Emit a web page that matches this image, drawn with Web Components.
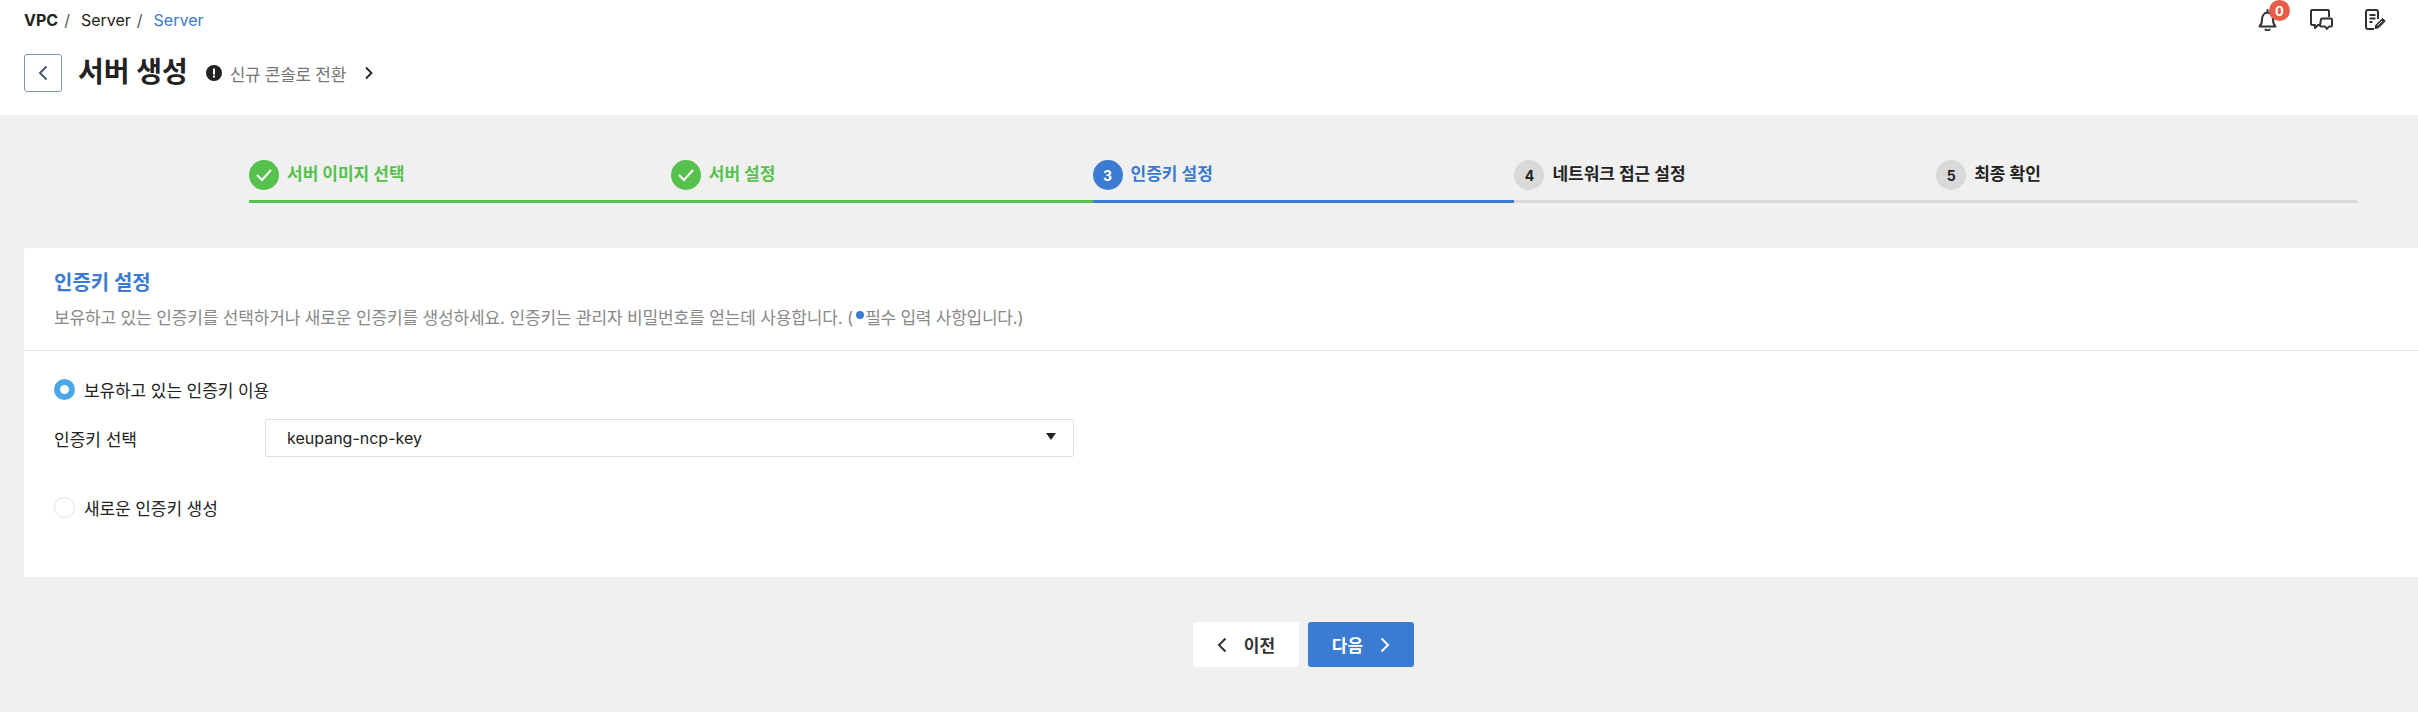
<!DOCTYPE html>
<html lang="ko">
<head>
<meta charset="utf-8">
<title>서버 생성</title>
<style>
    html, body { margin : 0; padding : 0; }
    body {
        background-color : #f0f0f0;
        font-family : Inter, "Noto Sans CJK KR", sans-serif;
        color : #222;
        height : 712px;
        overflow : hidden;
    }
</style>
</head>
<body>
<top-header></top-header>
<step-bar>
    <step-item state="done" label="서버 이미지 선택"></step-item>
    <step-item state="done" label="서버 설정"></step-item>
    <step-item state="active" num="3" label="인증키 설정"></step-item>
    <step-item num="4" label="네트워크 접근 설정"></step-item>
    <step-item num="5" label="최종 확인"></step-item>
</step-bar>
<key-card>
    <radio-option checked label="보유하고 있는 인증키 이용"></radio-option>
    <key-select label="인증키 선택" value="keupang-ncp-key"></key-select>
    <radio-option class="second" label="새로운 인증키 생성"></radio-option>
</key-card>
<page-nav></page-nav>

<script>
class TopHeader extends HTMLElement {
    constructor() {
        super();
        this.attachShadow({ mode : "open" });
    }

    connectedCallback() {
        this.shadowRoot.innerHTML = `
        <style>
            :host {
                display : block;
                background-color : white;
                height : 115px;
                padding : 0 24px;
                box-sizing : border-box;
                position : relative;
            }
            .crumbs {
                display : flex;
                height : 40px;
                align-items : center;
                font-size : 16px;
                color : #222;
            }
            .crumbs b { font-weight : 700; }
            .crumbs span { color : #555; margin : 0 11px 0 6px; }
            .crumbs .now { color : #3b7bd1; }
            .title-row {
                display : flex;
                align-items : center;
                height : 38px;
                margin-top : 14px;
            }
            .back {
                width : 38px;
                height : 38px;
                box-sizing : border-box;
                border : 1px solid #7d94b3;
                border-radius : 3px;
                display : flex;
                align-items : center;
                justify-content : center;
            }
            h1 {
                font-size : 28px;
                line-height : 38px;
                font-weight : 700;
                margin : -2px 0 0 16px;
                color : #222;
            }
            .notice {
                display : flex;
                align-items : center;
                margin-left : 18px;
                font-size : 17px;
                letter-spacing : -0.3px;
                color : #777;
            }
            .notice svg { margin-right : 8px; }
            .go { margin-left : 18px; display : flex; }
            .icons {
                position : absolute;
                top : 9px;
                right : 32px;
                display : flex;
                gap : 31px;
            }
            .bell { position : relative; width : 21px; height : 22px; }
            .badge {
                position : absolute;
                left : 11px;
                top : -9px;
                width : 21px;
                height : 21px;
                border-radius : 50%;
                background-color : #e85c4a;
                color : white;
                font-size : 13px;
                font-weight : 700;
                display : flex;
                align-items : center;
                justify-content : center;
            }
        </style>
        <nav class="crumbs"><b>VPC</b><span>/</span>Server<span>/</span><a class="now">Server</a></nav>
        <div class="title-row">
            <div class="back">
                <svg width="12" height="18" viewBox="0 0 12 18" fill="none" stroke="#44597a" stroke-width="2"><path d="M9.500 2.500 3 9l6.500 6.500"/></svg>
            </div>
            <h1>서버 생성</h1>
            <div class="notice">
                <svg width="16" height="16" viewBox="0 0 16 16"><circle cx="8" cy="8" r="8" fill="#222"/><rect x="7" y="3.500" width="2" height="6" fill="white"/><rect x="7" y="10.500" width="2" height="2" fill="white"/></svg>
                신규 콘솔로 전환
                <span class="go"><svg style="margin:0" width="10" height="14" viewBox="0 0 10 14" fill="none" stroke="#222" stroke-width="1.800"><path d="M2 1.500 7.500 7 2 12.500"/></svg></span>
            </div>
        </div>
        <div class="icons">
            <div class="bell">
                <svg width="21" height="22" viewBox="0 0 21 22" fill="none" stroke="#333" stroke-width="2" stroke-linejoin="round" stroke-linecap="round"><path d="M9.500 1v2.500M1.500 17.500c2-2 2.500-3.500 2.500-7 0-4 2.500-7 5.500-7s5.500 3 5.500 7c0 3.500.5 5 2.500 7z"/><path d="M7.500 20.500c1 1 3 1 4 0"/></svg>
                <span class="badge">0</span>
            </div>
            <svg width="24" height="22" viewBox="0 0 24 22" fill="none" stroke="#333" stroke-width="2" stroke-linejoin="round"><path d="M10 16H8l-3 3v-3H2a1 1 0 0 1-1-1V2a1 1 0 0 1 1-1h16a1 1 0 0 1 1 1v6"/><path d="M11 10.500a1 1 0 0 1 1-1h9a1 1 0 0 1 1 1v6a1 1 0 0 1-1 1h-2l-2 2.500-2-2.500h-4a1 1 0 0 1-1-1z"/></svg>
            <svg width="21" height="22" viewBox="0 0 21 22" fill="none" stroke="#333" stroke-width="2" stroke-linejoin="round"><path d="M9 20H3a2 2 0 0 1-2-2V3a2 2 0 0 1 2-2h8a2 2 0 0 1 2 2v7"/><path d="M4.500 6h6M4.500 9.500h6M4.500 13h3"/><path d="M10 19.500l.8-3.500 6.700-6.700 2.800 2.800-6.700 6.700z" fill="#333" stroke-width="1"/><path d="M12.500 16.500l4.500-4.500" stroke="white" stroke-width="1"/></svg>
        </div>
        `;
    }
}

class StepBar extends HTMLElement {
    constructor() {
        super();
        this.attachShadow({ mode : "open" });
    }

    connectedCallback() {
        this.shadowRoot.innerHTML = `
        <style>
            :host {
                display : grid;
                grid-template-columns : repeat(5, 1fr);
                padding : 45px 60px 0 249px;
                height : 133px;
                box-sizing : border-box;
            }
        </style>
        <slot></slot>
        `;
    }
}

class StepItem extends HTMLElement {
    constructor() {
        super();
        this.attachShadow({ mode : "open" });
    }

    get state() {
        return this.getAttribute('state');
    }

    get num() {
        return this.getAttribute('num');
    }

    get label() {
        return this.getAttribute('label');
    }

    connectedCallback() {
        const check = `<svg width="18" height="14" viewBox="0 0 18 14" fill="none" stroke="white" stroke-width="2"><path d="M2 7l5 5 9-10"/></svg>`;
        this.shadowRoot.innerHTML = `
        <style>
            :host {
                display : block;
                --c : #222;
                --line : #d9d9d9;
                --dot : #d9d9d9;
                --dot-c : #222;
            }
            :host([state="done"]) { --c : #57c14e; --line : #57c14e; --dot : #57c14e; --dot-c : white; }
            :host([state="active"]) { --c : #3b7bd1; --line : #3b7bd1; --dot : #3b7bd1; --dot-c : white; }
            .row {
                display : flex;
                align-items : center;
                height : 30px;
                padding-bottom : 10px;
                border-bottom : 3px solid var(--line);
            }
            .dot {
                width : 30px;
                height : 30px;
                border-radius : 50%;
                background-color : var(--dot);
                color : var(--dot-c);
                font-size : 14px;
                font-weight : 700;
                display : flex;
                align-items : center;
                justify-content : center;
                margin-right : 8px;
            }
            .label {
                font-size : 17px;
                line-height : 26px;
                margin-top : -2px;
                font-weight : 700;
                color : var(--c);
            }
        </style>
        <div class="row">
            <span class="dot">${this.state === 'done' ? check : this.num}</span>
            <span class="label">${this.label}</span>
        </div>
        `;
    }
}

class KeyCard extends HTMLElement {
    constructor() {
        super();
        this.attachShadow({ mode : "open" });
    }

    connectedCallback() {
        this.shadowRoot.innerHTML = `
        <style>
            :host {
                display : block;
                margin-left : 24px;
                background-color : white;
                border-radius : 3px 0 0 3px;
                height : 329px;
                box-sizing : border-box;
            }
            header {
                height : 103px;
                box-sizing : border-box;
                padding : 21px 30px 0;
                border-bottom : 1px solid #e2e2e2;
            }
            h2 {
                margin : 0;
                font-size : 20px;
                line-height : 28px;
                font-weight : 700;
                color : #3b7bd1;
            }
            p {
                margin : 9px 0 0;
                font-size : 17px;
                line-height : 24px;
                letter-spacing : -0.15px;
                color : #888;
                display : flex;
                align-items : center;
                white-space : pre;
            }
            p i {
                display : inline-block;
                width : 8px;
                height : 8px;
                border-radius : 50%;
                background-color : #3b7bd1;
                margin : -6px 1px 0 3px;
            }
            p span { letter-spacing : -0.25px; }
            .body { padding : 27px 30px 0; }
        </style>
        <header>
            <h2>인증키 설정</h2>
            <p>보유하고 있는 인증키를 선택하거나 새로운 인증키를 생성하세요. 인증키는 관리자 비밀번호를 얻는데 사용합니다. (<i></i><span>필수 입력 사항입니다.)</span></p>
        </header>
        <div class="body"><slot></slot></div>
        `;
    }
}

class RadioOption extends HTMLElement {
    constructor() {
        super();
        this.attachShadow({ mode : "open" });
    }

    get label() {
        return this.getAttribute('label');
    }

    connectedCallback() {
        this.shadowRoot.innerHTML = `
        <style>
            :host {
                display : flex;
                align-items : center;
                height : 22px;
                font-size : 17px;
                letter-spacing : -0.1px;
                color : #222;
            }
            :host(.second) { margin-top : 39px; }
            .mark {
                width : 21px;
                height : 21px;
                box-sizing : border-box;
                border-radius : 50%;
                border : 1px solid #e2e2e2;
                background-color : white;
                margin-right : 9px;
            }
            :host([checked]) .mark { border : 6px solid #4aa8e8; }
        </style>
        <span class="mark"></span>
        <span>${this.label}</span>
        `;
    }
}

class KeySelect extends HTMLElement {
    constructor() {
        super();
        this.attachShadow({ mode : "open" });
    }

    get label() {
        return this.getAttribute('label');
    }

    get value() {
        return this.getAttribute('value');
    }

    connectedCallback() {
        this.shadowRoot.innerHTML = `
        <style>
            :host {
                display : flex;
                align-items : center;
                margin-top : 19px;
                font-size : 17px;
                color : #222;
            }
            .name { width : 211px; }
            .box {
                width : 809px;
                height : 38px;
                box-sizing : border-box;
                border : 1px solid #e0e0e0;
                border-radius : 2px;
                padding : 0 21px;
                font-size : 16px;
                display : flex;
                align-items : center;
                justify-content : space-between;
                color : #222;
            }
            .caret {
                width : 0;
                height : 0;
                border-left : 5px solid transparent;
                border-right : 5px solid transparent;
                border-top : 7px solid #222;
                margin : -4px -4px 0 0;
            }
        </style>
        <span class="name">${this.label}</span>
        <div class="box"><span>${this.value}</span><span class="caret"></span></div>
        `;
    }
}

class PageNav extends HTMLElement {
    constructor() {
        super();
        this.attachShadow({ mode : "open" });
    }

    connectedCallback() {
        this.shadowRoot.innerHTML = `
        <style>
            :host {
                display : flex;
                justify-content : center;
                gap : 9px;
                padding : 45px 0 0 189px;
            }
            .btn {
                width : 106px;
                height : 45px;
                border-radius : 3px;
                display : flex;
                align-items : center;
                justify-content : center;
                font-size : 17px;
                font-weight : 700;
                gap : 17px;
            }
            .prev { background-color : white; color : #333; }
            .next { background-color : #3b7bd1; color : white; }
        </style>
        <div class="btn prev">
            <svg width="10" height="16" viewBox="0 0 10 16" fill="none" stroke="#333" stroke-width="2"><path d="M8.500 1.500 2 8l6.500 6.500"/></svg>
            이전
        </div>
        <div class="btn next">
            다음
            <svg width="10" height="16" viewBox="0 0 10 16" fill="none" stroke="white" stroke-width="2"><path d="M1.500 1.500 8 8l-6.500 6.500"/></svg>
        </div>
        `;
    }
}

window.customElements.define('top-header', TopHeader);
window.customElements.define('step-bar', StepBar);
window.customElements.define('step-item', StepItem);
window.customElements.define('key-card', KeyCard);
window.customElements.define('radio-option', RadioOption);
window.customElements.define('key-select', KeySelect);
window.customElements.define('page-nav', PageNav);
</script>
</body>
</html>
